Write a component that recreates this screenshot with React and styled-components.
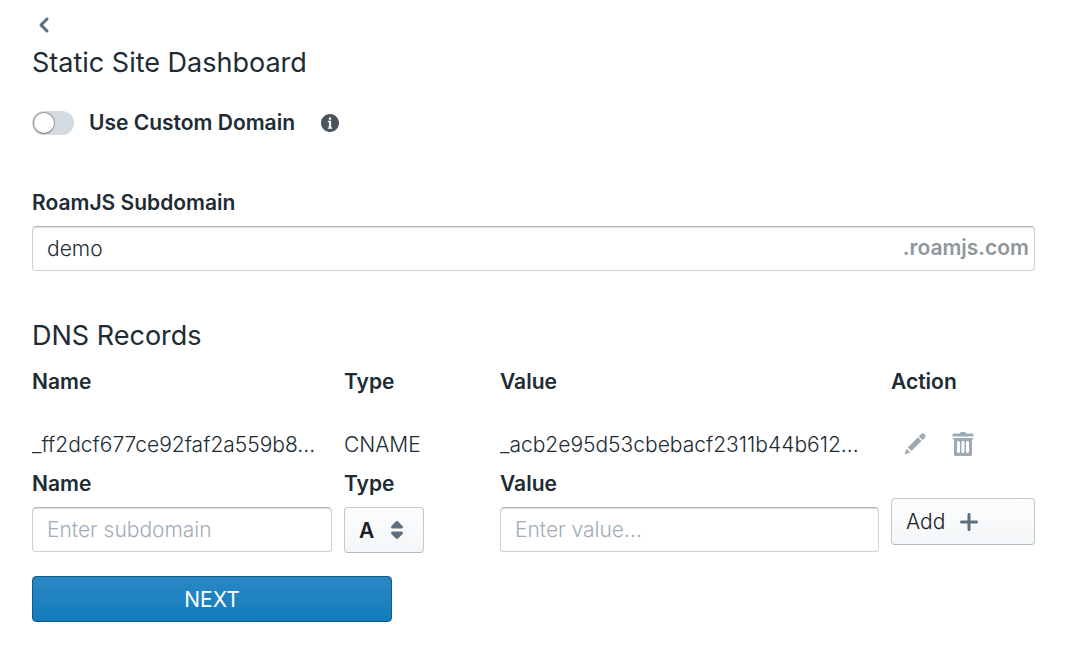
import React, { useState } from 'react';
import styled, { createGlobalStyle } from 'styled-components';

const icons = {
    back: 'M7.41 8l3.29-3.29c.19-.18.3-.43.3-.71a1.003 1.003 0 00-1.71-.71l-4 4C5.11 7.47 5 7.72 5 8c0 .28.11.53.29.71l4 4a1.003 1.003 0 001.42-1.42L7.41 8z',
    info: 'M8 0C3.58 0 0 3.58 0 8s3.58 8 8 8 8-3.58 8-8-3.58-8-8-8zM7 3h2v2H7V3zm3 10H6v-1h1V7H6V6h3v6h1v1z',
    caret: 'M5 7h6a1.003 1.003 0 00.71-1.71l-3-3C8.53 2.11 8.28 2 8 2s-.53.11-.71.29l-3 3A1.003 1.003 0 005 7zm6 2H5a1.003 1.003 0 00-.71 1.71l3 3c.18.18.43.29.71.29s.53-.11.71-.29l3-3A1.003 1.003 0 0011 9z',
    plus: 'M13 7H9V3c0-.55-.45-1-1-1s-1 .45-1 1v4H3c-.55 0-1 .45-1 1s.45 1 1 1h4v4c0 .55.45 1 1 1s1-.45 1-1V9h4c.55 0 1-.45 1-1s-.45-1-1-1z',
    edit: 'M3.25 10.26l2.47 2.47 6.69-6.69-2.46-2.48-6.7 6.7zM.99 14.99l3.86-1.39-2.46-2.44-1.4 3.83zm12.25-14c-.48 0-.92.2-1.24.51l-1.44 1.44 2.47 2.47 1.44-1.44c.32-.32.51-.75.51-1.24.01-.95-.77-1.74-1.74-1.74z',
    trash: 'M14.49 3.99h-13c-.28 0-.5.22-.5.5s.22.5.5.5h.5v10c0 .55.45 1 1 1h10c.55 0 1-.45 1-1v-10h.5c.28 0 .5-.22.5-.5s-.22-.5-.5-.5zm-8.5 9c0 .55-.45 1-1 1s-1-.45-1-1v-6c0-.55.45-1 1-1s1 .45 1 1v6zm3 0c0 .55-.45 1-1 1s-1-.45-1-1v-6c0-.55.45-1 1-1s1 .45 1 1v6zm3 0c0 .55-.45 1-1 1s-1-.45-1-1v-6c0-.55.45-1 1-1s1 .45 1 1v6zm2-12h-4c0-.55-.45-1-1-1h-2c-.55 0-1 .45-1 1h-4c-.55 0-1 .45-1 1v1h14v-1c0-.55-.45-1-1-1z',
};

const Icon = ({ name, size = 24 }) => (
    <Svg width={size} height={size} viewBox='0 0 16 16' aria-hidden='true'>
        <path d={icons[name]} fillRule='evenodd' />
    </Svg>
);

const App = () => {
    const [custom, setCustom] = useState(false);
    const [subdomain, setSubdomain] = useState('demo');
    const [type, setType] = useState('A');

    return (
        <>
            <GlobalStyle />
            <Page>
                <BackButton type='button' aria-label='Back'>
                    <Icon name='back' />
                </BackButton>
                <Title>Static Site Dashboard</Title>
                <SwitchRow>
                    <SwitchLabel>
                        <Switch
                            type='checkbox'
                            role='switch'
                            checked={custom}
                            onChange={(e) => setCustom(e.target.checked)}
                        />
                        Use Custom Domain
                    </SwitchLabel>
                    <Info>
                        <Icon name='info' size={18} />
                    </Info>
                </SwitchRow>
                <Field>
                    <Label htmlFor='subdomain'>RoamJS Subdomain</Label>
                    <InputGroup>
                        <GroupInput
                            id='subdomain'
                            value={subdomain}
                            onChange={(e) => setSubdomain(e.target.value)}
                        />
                        <Suffix>.roamjs.com</Suffix>
                    </InputGroup>
                </Field>
                <Title as='h2'>DNS Records</Title>
                <Table>
                    <thead>
                        <Row>
                            <Th>Name</Th>
                            <Th>Type</Th>
                            <Th>Value</Th>
                            <Th>Action</Th>
                        </Row>
                    </thead>
                    <tbody>
                        <Row>
                            <Td>_ff2dcf677ce92faf2a559b8...</Td>
                            <Td>CNAME</Td>
                            <Td>_acb2e95d53cbebacf2311b44b612...</Td>
                            <Actions>
                                <IconButton type='button' aria-label='Edit record' disabled>
                                    <Icon name='edit' />
                                </IconButton>
                                <IconButton type='button' aria-label='Delete record' disabled>
                                    <Icon name='trash' />
                                </IconButton>
                            </Actions>
                        </Row>
                    </tbody>
                </Table>
                <RecordForm onSubmit={(e) => e.preventDefault()}>
                    <Field>
                        <Label htmlFor='name'>Name</Label>
                        <Input id='name' placeholder='Enter subdomain' />
                    </Field>
                    <Field>
                        <Label htmlFor='type'>Type</Label>
                        <SelectWrap>
                            <Select id='type' value={type} onChange={(e) => setType(e.target.value)}>
                                <option>A</option>
                                <option>AAAA</option>
                                <option>CNAME</option>
                                <option>NS</option>
                            </Select>
                            <SelectIcon>
                                <Icon name='caret' />
                            </SelectIcon>
                        </SelectWrap>
                    </Field>
                    <Field>
                        <Label htmlFor='value'>Value</Label>
                        <Input id='value' placeholder='Enter value...' />
                    </Field>
                    <AddButton type='submit'>
                        Add
                        <Icon name='plus' />
                    </AddButton>
                </RecordForm>
                <NextButton type='button'>NEXT</NextButton>
            </Page>
        </>
    );
};

const GlobalStyle = createGlobalStyle`
    * {
        box-sizing: border-box;
    }
    body {
        margin: 0;
        background: white;
        color: #202b33;
        font-family: Inter, 'Liberation Sans', sans-serif;
        font-size: 21px;
        font-weight: 300;
        line-height: 27px;
    }
    button, input, select {
        font: inherit;
        color: inherit;
    }
`;

const Svg = styled.svg`
    display: block;
    flex: none;
    fill: currentColor;
`;

const Page = styled.main`
    padding: 13px 35px 34px 32px;
`;

const BackButton = styled.button`
    display: block;
    padding: 0;
    border: none;
    background: none;
    color: #5c7080;
    cursor: pointer;
`;

const Title = styled.h1`
    margin: 10px 0 0;
    font-size: 27px;
    font-weight: 400;
    line-height: 32px;
`;

const SwitchRow = styled.div`
    display: flex;
    align-items: center;
    gap: 26px;
    margin: 30px 0 52px;
`;

const SwitchLabel = styled.label`
    display: flex;
    align-items: center;
    gap: 15px;
    font-weight: 600;
    line-height: 28px;
    cursor: pointer;
`;

const Switch = styled.input`
    appearance: none;
    display: flex;
    align-items: center;
    width: 42px;
    height: 24px;
    margin: 0;
    padding: 0 2px;
    border-radius: 12px;
    background: #d3dae0;
    cursor: pointer;
    &::before {
        content: '';
        width: 20px;
        height: 20px;
        border-radius: 50%;
        background: white;
        box-shadow: 0 0 0 1px rgba(16, 22, 26, 0.3), 0 1px 1px rgba(16, 22, 26, 0.2);
    }
    &:checked {
        justify-content: flex-end;
        background: #137cbd;
    }
`;

const Info = styled.span`
    color: #4a545c;
`;

const Field = styled.div`
    display: flex;
    flex-direction: column;
    gap: 10px;
    min-width: 0;
    & + h2 {
        margin-top: 49px;
    }
`;

const Label = styled.label`
    font-weight: 600;
`;

const Input = styled.input`
    width: 100%;
    height: 45px;
    padding: 0 14px;
    border: 1px solid #cfd1d2;
    border-top-color: #b4b6b8;
    border-radius: 4px;
    background: white;
    box-shadow: inset 0 1px 1px rgba(16, 22, 26, 0.15);
    &::placeholder {
        color: #a0adb8;
        opacity: 1;
    }
`;

const InputGroup = styled.div`
    position: relative;
`;

const GroupInput = styled(Input)`
    display: block;
    padding-right: 144px;
`;

const Suffix = styled.span`
    position: absolute;
    top: 8px;
    right: 6px;
    color: #90979c;
    font-weight: 600;
`;

const Table = styled.table`
    display: block;
    margin-top: 16px;
    thead, tbody {
        display: block;
    }
`;

const Row = styled.tr`
    display: grid;
    grid-template-columns: 300fr 144fr 379fr 144fr;
    column-gap: 12px;
    align-items: center;
    tbody & {
        margin-top: 25px;
    }
`;

const Th = styled.th`
    padding: 0;
    font-weight: 600;
    text-align: left;
`;

const Td = styled.td`
    min-width: 0;
    padding: 0;
    overflow: hidden;
    text-overflow: ellipsis;
    white-space: nowrap;
`;

const Actions = styled.td`
    display: flex;
    padding: 0;
`;

const IconButton = styled.button`
    display: flex;
    align-items: center;
    justify-content: center;
    width: 48px;
    height: 48px;
    padding: 0;
    border: none;
    background: none;
    color: #9da9b3;
`;

const RecordForm = styled.form`
    display: grid;
    grid-template-columns: 300fr 144fr 379fr 144fr;
    column-gap: 12px;
    margin-top: 2px;
`;

const SelectWrap = styled.div`
    position: relative;
    width: 80px;
`;

const Select = styled.select`
    appearance: none;
    display: block;
    width: 100%;
    height: 46px;
    padding: 0 14px;
    border: 1px solid #c5c9cc;
    border-bottom-color: #b4b9bd;
    border-radius: 4px;
    background: linear-gradient(#fdfdfe, #f3f6f8);
    color: #182026;
    font-weight: 600;
    cursor: pointer;
`;

const SelectIcon = styled.span`
    position: absolute;
    top: 11px;
    right: 15px;
    color: #5c7080;
    pointer-events: none;
`;

const AddButton = styled.button`
    display: flex;
    align-items: center;
    align-self: end;
    gap: 12px;
    height: 47px;
    margin-bottom: 8px;
    padding: 0 14px;
    border: 1px solid #c5c9cc;
    border-bottom-color: #b4b9bd;
    border-radius: 4px;
    background: linear-gradient(#fdfdfe, #f3f6f8);
    color: #182026;
    cursor: pointer;
    svg {
        color: #5c7080;
    }
`;

const NextButton = styled.button`
    display: block;
    width: 360px;
    max-width: 100%;
    height: 46px;
    margin-top: 23px;
    border: 1px solid #115b89;
    border-radius: 4px;
    background: linear-gradient(#2b87c3, #137cbd);
    color: white;
    font-weight: 400;
    cursor: pointer;
`;

export default App;
